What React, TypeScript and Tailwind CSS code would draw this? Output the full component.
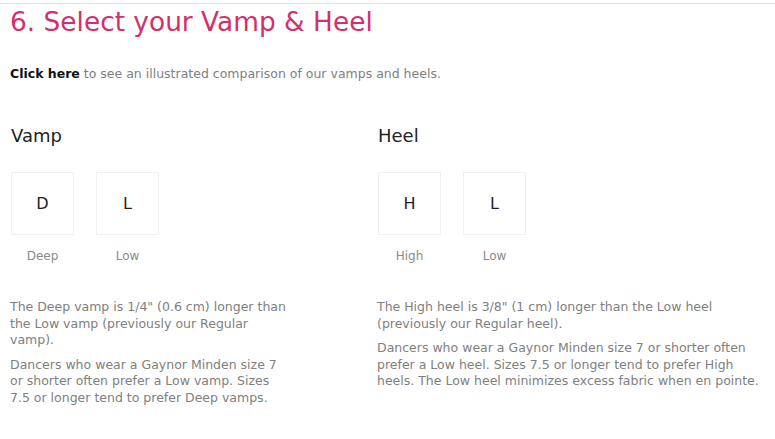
import React from 'react'

const font = { fontFamily: '"DejaVu Sans", sans-serif' }

type Option = { letter: string; label: string }

function OptionBox({ letter, label }: Option) {
  return (
    <div className="flex flex-col items-center w-[63px]">
      <div className="w-[63px] h-[63px] border border-[#f0f0f0] flex items-center justify-center text-[16px] text-[#222]">
        {letter}
      </div>
      <div className="mt-[12px] text-[12px] text-[#8a8a8a]">{label}</div>
    </div>
  )
}

function Column({
  title,
  options,
  paragraphs,
  textWidth,
}: {
  title: string
  options: Option[]
  paragraphs: string[]
  textWidth: string
}) {
  return (
    <div className="flex flex-col">
      <h2 className="text-[18px] text-[#222] leading-none pl-px">{title}</h2>
      <div className="flex gap-[22px] mt-[27px] pl-px">
        {options.map((o) => (
          <OptionBox key={o.letter} {...o} />
        ))}
      </div>
      <div className={`mt-[34px] ${textWidth} text-[12.5px] leading-[16.5px] text-[#808080] flex flex-col gap-[8px]`}>
        {paragraphs.map((p, i) => (
          <p key={i}>{p}</p>
        ))}
      </div>
    </div>
  )
}

export default function App() {
  return (
    <div className="w-[775px] h-[439px] bg-white overflow-hidden" style={font}>
      <div className="mt-[3px] border-t border-[#e2e2e2]" />
      <div className="px-[10px]">
        <h1 className="text-[26.4px] text-[#d3306b] font-normal leading-none mt-[5px]">
          6. Select your Vamp &amp; Heel
        </h1>
        <p className="mt-[30px] text-[12.5px] text-[#808080]">
          <span className="font-bold text-[#111]">Click here</span> to see an illustrated comparison of our vamps
          and heels.
        </p>
        <div className="flex mt-[43px]">
          <div className="w-[367px]">
            <Column
              title="Vamp"
              textWidth="w-[280px]"
              options={[
                { letter: 'D', label: 'Deep' },
                { letter: 'L', label: 'Low' },
              ]}
              paragraphs={[
                'The Deep vamp is 1/4" (0.6 cm) longer than the Low vamp (previously our Regular vamp).',
                'Dancers who wear a Gaynor Minden size 7 or shorter often prefer a Low vamp. Sizes 7.5 or longer tend to prefer Deep vamps.',
              ]}
            />
          </div>
          <div className="flex-1">
            <Column
              title="Heel"
              textWidth="w-[385px]"
              options={[
                { letter: 'H', label: 'High' },
                { letter: 'L', label: 'Low' },
              ]}
              paragraphs={[
                'The High heel is 3/8" (1 cm) longer than the Low heel (previously our Regular heel).',
                'Dancers who wear a Gaynor Minden size 7 or shorter often prefer a Low heel. Sizes 7.5 or longer tend to prefer High heels. The Low heel minimizes excess fabric when en pointe.',
              ]}
            />
          </div>
        </div>
      </div>
    </div>
  )
}
